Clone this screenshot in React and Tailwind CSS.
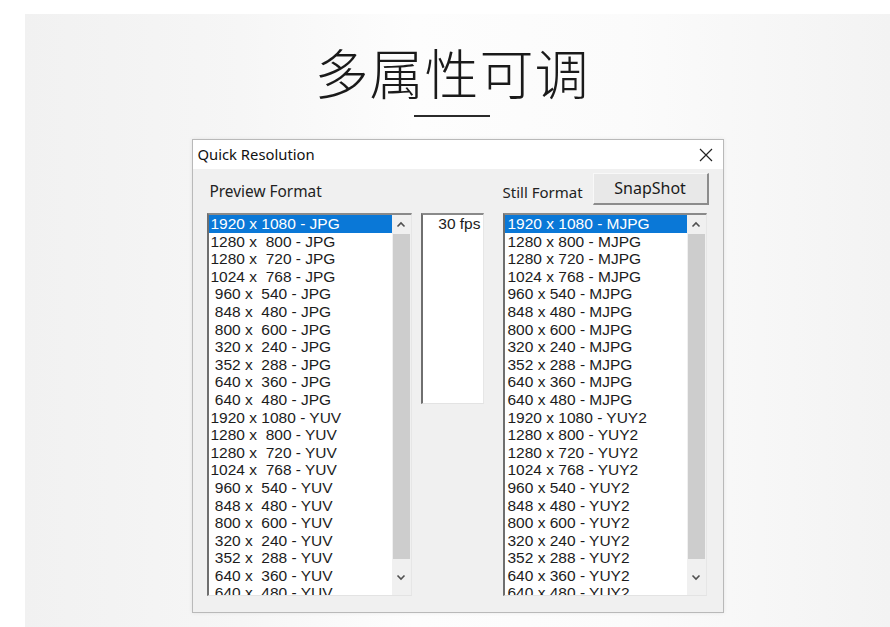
import React from 'react';

const sizes = [
    ['1920', '1080'],
    ['1280', '800'],
    ['1280', '720'],
    ['1024', '768'],
    ['960', '540'],
    ['848', '480'],
    ['800', '600'],
    ['320', '240'],
    ['352', '288'],
    ['640', '360'],
    ['640', '480'],
];

const previewItems = [
    ...sizes.map(([w, h]) => `${w.padStart(4, ' ')} x ${h.padStart(4, ' ')} - JPG`),
    ...sizes.map(([w, h]) => `${w.padStart(4, ' ')} x ${h.padStart(4, ' ')} - YUV`),
];

const stillItems = [
    ...sizes.map(([w, h]) => `${w} x ${h} - MJPG`),
    ...sizes.map(([w, h]) => `${w} x ${h} - YUY2`),
];

const uiFont = { fontFamily: '"Noto Sans", "Open Sans", sans-serif' };

function Chevron({ up }) {
    return (
        <svg width="10" height="7" viewBox="0 0 10 7">
            <path
                d={up ? 'M1.5 5.5 L5 2 L8.5 5.5' : 'M1.5 1.5 L5 5 L8.5 1.5'}
                fill="none"
                stroke="#505050"
                strokeWidth="1.6"
            />
        </svg>
    );
}

function ListBox({ items, width, textPad }) {
    return (
        <div
            className="flex h-[383px] border-t-2 border-l-2 border-t-[#8a8a8a] border-l-[#6f6f6f] border-r border-b border-r-[#e6e6e6] border-b-[#e3e3e3] bg-white"
            style={{ width }}
        >
            <div className="flex-1 overflow-hidden">
                {items.map((item, i) => (
                    <div
                        key={i}
                        className={
                            i === 0
                                ? 'h-[17.6px] leading-[17.6px] whitespace-pre bg-[#0a78d7] text-white'
                                : 'h-[17.6px] leading-[17.6px] whitespace-pre text-[#1c1c1c]'
                        }
                        style={{ paddingLeft: textPad }}
                    >
                        {item}
                    </div>
                ))}
            </div>
            <div className="flex w-[19px] flex-col bg-[#f0f0f0]">
                <div className="flex h-[19px] items-center justify-center">
                    <Chevron up />
                </div>
                <div className="mx-[1px] h-[325px] bg-[#cdcdcd]" />
                <div className="flex flex-1 items-center justify-center">
                    <Chevron />
                </div>
            </div>
        </div>
    );
}

export default function App() {
    return (
        <div className="h-[627px] w-[890px] bg-white pt-[14px] pl-[25px]">
            <div className="flex h-[613px] flex-col items-center bg-[linear-gradient(90deg,#f1f1f1_0%,#f6f6f6_25%,#fdfdfd_45%,#fbfbfb_70%,#f3f3f3_100%)]">
                <h1
                    className="mt-[26px] ml-[-11px] text-[54px] leading-[64px] font-light tracking-[1px] text-[#1a1a1a]"
                    style={{ fontFamily: '"Noto Sans CJK SC", "Noto Sans", sans-serif' }}
                >
                    多属性可调
                </h1>
                <div className="mt-[11px] ml-[-11px] h-[2px] w-[76px] bg-[#2a2a2a]" />

                <div
                    className="mt-[22px] flex h-[474px] w-[532px] flex-col border border-[#b9b9b9] bg-[#f0f0f0] shadow-[0_0_4px_rgba(0,0,0,0.08)]"
                    style={{ fontFamily: '"Liberation Sans", Arial, sans-serif' }}
                >
                    <div className="flex h-[29px] items-center justify-between bg-white pl-[5px] pr-[10px]">
                        <span className="text-[14.8px] text-[#111]" style={uiFont}>
                            Quick Resolution
                        </span>
                        <svg width="14" height="14" viewBox="0 0 14 14">
                            <path d="M1 1 L13 13 M13 1 L1 13" stroke="#222" strokeWidth="1.2" />
                        </svg>
                    </div>

                    <div className="flex pl-[14px] text-[15.5px]">
                        <div className="flex flex-col">
                            <div
                                className="flex h-[44px] items-center pl-[3px] pt-[2px] text-[15.4px] text-[#222]"
                                style={uiFont}
                            >
                                Preview Format
                            </div>
                            <ListBox items={previewItems} width={205} textPad={2} />
                        </div>

                        <div className="ml-[9px] mt-[44px] h-[191px] w-[63px] border-t-2 border-l-2 border-t-[#8a8a8a] border-l-[#6f6f6f] border-r border-b border-r-[#e6e6e6] border-b-[#e3e3e3] bg-white pr-[2px] text-right text-[#1c1c1c]">
                            <div className="h-[17.6px] leading-[17.6px]">30 fps</div>
                        </div>

                        <div className="ml-[19px] flex flex-col">
                            <div className="flex h-[44px] items-center">
                                <span className="pt-[2px] text-[15px] text-[#222]" style={uiFont}>
                                    Still Format
                                </span>
                                <button
                                    className="ml-[10px] mb-[7px] mt-[2px] h-[32px] w-[116px] border border-t-[#f8f8f8] border-l-[#f8f8f8] border-r-2 border-b-2 border-r-[#8c8c8c] border-b-[#8c8c8c] bg-[#e8e8e8] text-[16px] text-[#1a1a1a]"
                                    style={uiFont}
                                >
                                    SnapShot
                                </button>
                            </div>
                            <ListBox items={stillItems} width={204} textPad={3} />
                        </div>
                    </div>
                </div>
            </div>
        </div>
    );
}
